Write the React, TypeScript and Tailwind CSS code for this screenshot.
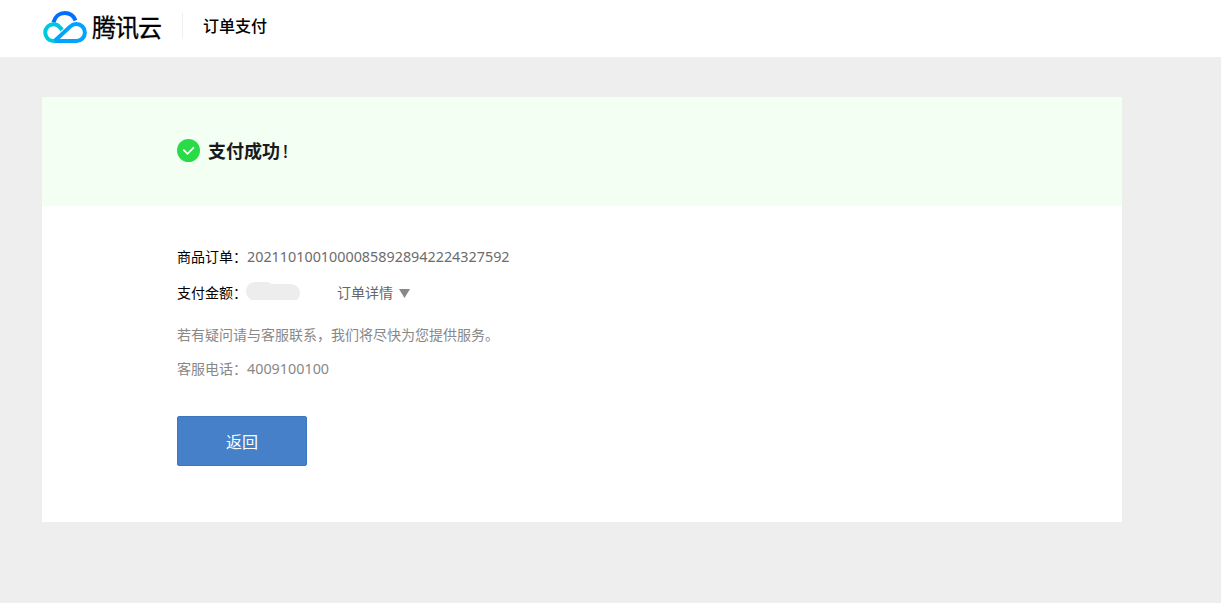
import React from 'react';

function CloudLogo() {
  return (
    <svg className="block h-8 w-11" viewBox="0 0 44 32" fill="none" strokeWidth="4">
      <path d="M10.400 11.400C11.800 5.800 16.400 2 21.800 2c5 0 8.900 2.900 10.700 7.400" stroke="#006eff" />
      <path d="M19.200 18.800 16.200 15.600C14.800 14 12.800 13.200 10.600 13.200a8.400 8.400 0 0 0 0 16.800H15" stroke="#00c8dc" />
      <path
        d="M12.600 30H33.400a8.500 8.500 0 0 0 0-17c-2.500 0-4.600 1-6.300 2.600L11.900 29.800"
        stroke="#00a3ff"
      />
    </svg>
  );
}

function Header() {
  return (
    <header className="flex h-[57px] items-start bg-white pl-[43px]">
      <div className="mt-[11px]">
        <CloudLogo />
      </div>
      <span className="ml-[5px] mt-[11px] w-[69px] origin-left scale-x-[0.96] whitespace-nowrap text-[25px] leading-8 tracking-[-1px] text-black [-webkit-text-stroke:0.3px_#000]">
        腾讯云
      </span>
      <div className="ml-[21px] mt-[13px] h-[26px] w-px bg-[#eeeeee]" />
      <h1 className="ml-5 mt-[14px] text-base leading-6 font-medium text-black">订单支付</h1>
    </header>
  );
}

function SuccessBanner() {
  return (
    <div className="flex h-[109px] items-center bg-[#f3fff3] pb-[2px] pl-[135px]">
      <svg className="h-[23px] w-[23px]" viewBox="0 0 23 23" fill="none">
        <circle cx="11.5" cy="11.5" r="11.5" fill="#29dc47" />
        <path d="m6.300 10.600 4.200 4.200 6.400-6.400" stroke="#fff" strokeWidth="1.800" />
      </svg>
      <h2 className="ml-2 text-lg font-bold text-[#1a1a1a]">
        支付成功<span className="ml-[3px] font-medium">!</span>
      </h2>
    </div>
  );
}

function RedactedAmount() {
  return (
    <svg className="mb-1 ml-[-1px] h-[18px] w-[54px]" viewBox="0 0 54 18">
      <path d="M9 0h13l4 2h18c6 0 10 4 10 9 0 3-1 5-3 7H5C2 16 0 13 0 9.500 0 4 4 0 9 0Z" fill="#ededed" />
    </svg>
  );
}

export default function App() {
  return (
    <div className="min-h-screen bg-[#eeeeee] font-['Noto_Sans','Noto_Sans_CJK_SC',sans-serif] text-sm">
      <Header />
      <main className="ml-[42px] mt-10 h-[425px] w-[1080px] bg-white">
        <SuccessBanner />
        <section className="pl-[135px] pt-[39px]">
          <div className="flex h-6 items-center">
            <span className="w-[70px] text-black">商品订单：</span>
            <span className="text-[14.35px] text-[#6c6c6c]">20211010010000858928942224327592</span>
          </div>
          <div className="mt-3 flex h-6 items-center">
            <span className="w-[70px] text-black">支付金额：</span>
            <RedactedAmount />
            <button className="ml-[37px] flex items-center text-[#666666]">
              订单详情
              <svg className="ml-[6px] h-[9px] w-[11px]" viewBox="0 0 11 9">
                <path d="M0 0h11L5.500 9Z" fill="#888888" />
              </svg>
            </button>
          </div>
          <p className="mt-[18px] h-6 leading-6 text-[#888888]">若有疑问请与客服联系，我们将尽快为您提供服务。</p>
          <div className="mt-[10px] flex h-6 items-center text-[#888888]">
            <span className="w-[70px]">客服电话：</span>
            <span className="text-[14.35px]">4009100100</span>
          </div>
          <button className="mt-[35px] flex h-[50px] w-[130px] items-center justify-center rounded-[2px] border border-[#3b78c3] bg-[#4580c9] pt-0.5 text-base text-white">
            返回
          </button>
        </section>
      </main>
    </div>
  );
}
